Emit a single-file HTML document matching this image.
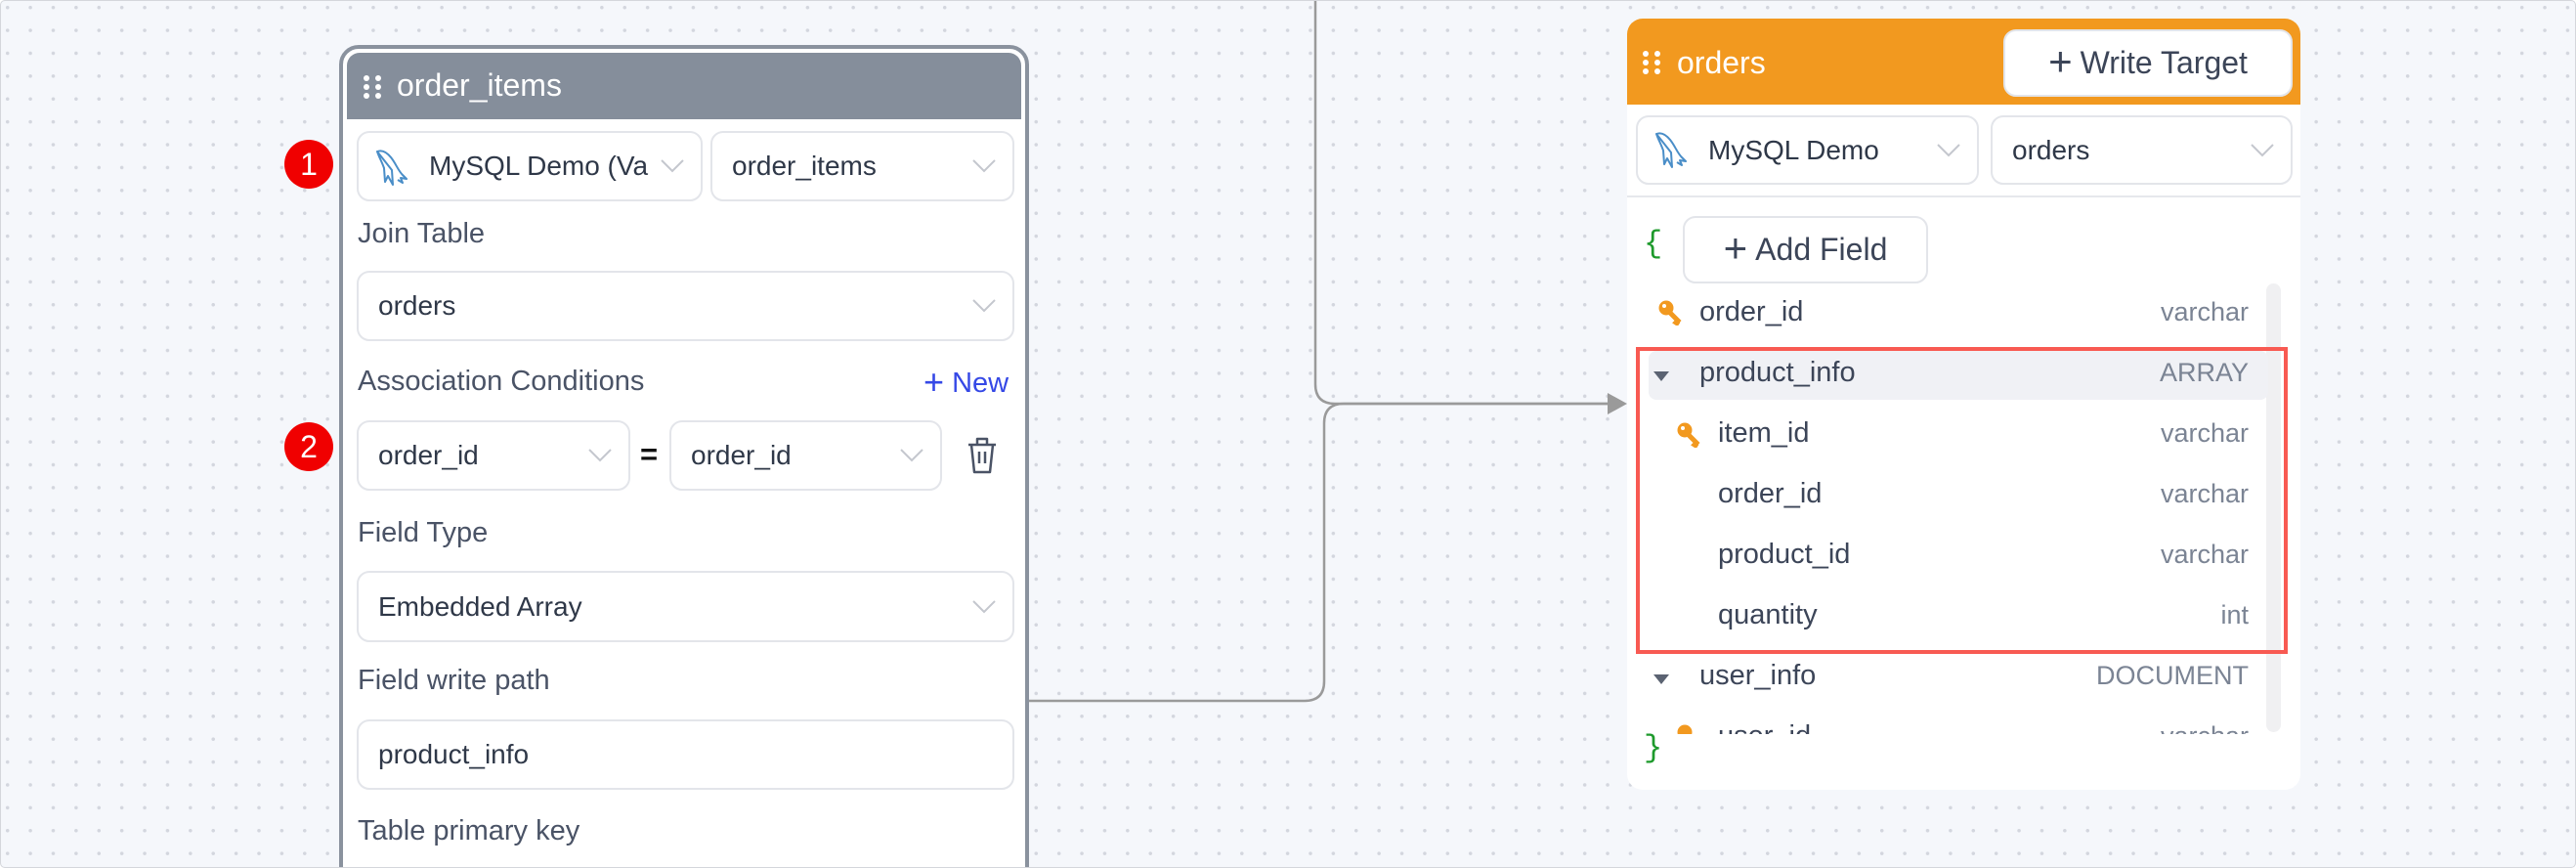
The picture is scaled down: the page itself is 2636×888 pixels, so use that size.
<!DOCTYPE html>
<html><head><meta charset="utf-8"><style>
*{box-sizing:border-box;margin:0;padding:0}
body{width:2636px;height:888px;overflow:hidden;background:#fff;font-family:"Liberation Sans",sans-serif;color:#3c4558;position:relative}
.frame{position:absolute;left:0;top:0;width:2636px;height:888px;border:1.5px solid #d4d6db;border-radius:5px;overflow:hidden;background-color:#f5f7fb;background-image:radial-gradient(circle,#d3d6de 1.6px,transparent 2px);background-size:23.4px 23.4px;background-position:-5px -5px}
.a{position:absolute}
.sel{position:absolute;background:#fff;border:2px solid #e3e5ea;border-radius:13px;font-size:28px;color:#2f3848;display:flex;align-items:center;padding-left:20px;white-space:nowrap;overflow:hidden}
.sel svg.chev{position:absolute;right:16px;top:50%;margin-top:-8px}
.lbl{position:absolute;font-size:29px;color:#4a5366}
.badge{position:absolute;width:50px;height:50px;border-radius:50%;background:#f00000;color:#fff;font-size:32px;display:flex;align-items:center;justify-content:center}
.row{position:absolute;left:0;width:640px;height:40px;font-size:29px;color:#3c4558}
.row .t{position:absolute;right:0;color:#7b8494;font-size:27px;top:1px}
</style></head><body>
<div class="frame">
<svg class="a" style="left:0;top:0" width="2636" height="888">
<path d="M1345 0 V392 Q1345 412 1365 412 H1650" fill="none" stroke="#9a9a9a" stroke-width="2.5"/>
<path d="M1044 716 H1334 Q1354 716 1354 696 V432 Q1354 412 1374 412 H1650" fill="none" stroke="#9a9a9a" stroke-width="2.5"/>
<path d="M1644 401 L1664 412 L1644 423 Z" fill="#9a9a9a"/>
</svg>

<!-- left node -->
<div class="a" style="left:346px;top:45px;width:706px;height:860px;border:4px solid #8a929e;border-radius:20px;background:#fff"></div>
<div class="a" style="left:354px;top:53px;width:690px;height:68px;background:#858e9b;border-radius:13px 13px 0 0"></div>
<svg class="a" style="left:370px;top:75px" width="22" height="26"><g fill="#fff"><circle cx="4" cy="4" r="3"/><circle cx="16" cy="4" r="3"/><circle cx="4" cy="13" r="3"/><circle cx="16" cy="13" r="3"/><circle cx="4" cy="22" r="3"/><circle cx="16" cy="22" r="3"/></g></svg>
<div class="a" style="left:405px;top:68px;font-size:32px;color:#fff">order_items</div>

<div class="badge" style="left:290px;top:142px">1</div>
<div class="sel" style="left:364px;top:133px;width:354px;height:72px;padding-left:72px">
<svg class="a" style="left:16px;top:16px" width="36" height="40" viewBox="0 0 36 40"><path d="M3 3 C8 1 13 4 17 9 C22 15 24 22 29 27 L33 31 L27 30 L29 35 L24 32 M18 22 L19 37 L14 28 L11 34 L10 20 C8 14 5 9 3 3 Z" fill="none" stroke="#4a8ec8" stroke-width="2" stroke-linejoin="round"/></svg>
MySQL Demo (Va
<svg class="chev" width="26" height="16"><polyline points="2,2 13,13 24,2" fill="none" stroke="#c4c7ce" stroke-width="2"/></svg></div>
<div class="sel" style="left:726px;top:133px;width:311px;height:72px">order_items<svg class="chev" width="26" height="16"><polyline points="2,2 13,13 24,2" fill="none" stroke="#c4c7ce" stroke-width="2"/></svg></div>

<div class="lbl" style="left:365px;top:222px">Join Table</div>
<div class="sel" style="left:364px;top:276px;width:673px;height:72px">orders<svg class="chev" width="26" height="16"><polyline points="2,2 13,13 24,2" fill="none" stroke="#c4c7ce" stroke-width="2"/></svg></div>

<div class="lbl" style="left:365px;top:373px">Association Conditions</div>
<div class="a" style="left:944px;top:373px;font-size:29px;color:#3548e6"><span style="font-size:36px;line-height:29px;position:relative;top:2px">+</span> New</div>

<div class="badge" style="left:290px;top:431px">2</div>
<div class="sel" style="left:364px;top:429px;width:280px;height:72px">order_id<svg class="chev" width="26" height="16"><polyline points="2,2 13,13 24,2" fill="none" stroke="#c4c7ce" stroke-width="2"/></svg></div>
<div class="a" style="left:654px;top:446px;font-size:31px;font-weight:bold;color:#111">=</div>
<div class="sel" style="left:684px;top:429px;width:279px;height:72px">order_id<svg class="chev" width="26" height="16"><polyline points="2,2 13,13 24,2" fill="none" stroke="#c4c7ce" stroke-width="2"/></svg></div>
<svg class="a" style="left:988px;top:445px" width="32" height="40" viewBox="0 0 32 40"><g fill="none" stroke="#4a5366" stroke-width="2.5" stroke-linejoin="round"><path d="M2 9 H30"/><path d="M11 9 V3 H21 V9"/><path d="M5 9 L8 37 H24 L27 9"/><path d="M13 16 V28 M19 16 V28"/></g></svg>

<div class="lbl" style="left:365px;top:528px">Field Type</div>
<div class="sel" style="left:364px;top:583px;width:673px;height:73px">Embedded Array<svg class="chev" width="26" height="16"><polyline points="2,2 13,13 24,2" fill="none" stroke="#c4c7ce" stroke-width="2"/></svg></div>
<div class="lbl" style="left:365px;top:679px">Field write path</div>
<div class="sel" style="left:364px;top:735px;width:673px;height:72px">product_info</div>
<div class="lbl" style="left:365px;top:833px">Table primary key</div>

<!-- right node -->
<div class="a" style="left:1664px;top:18px;width:689px;height:789px;background:#fff;border-radius:16px;overflow:hidden">
 <div class="a" style="left:0;top:0;width:689px;height:88px;background:#f2991f"></div>
 <svg class="a" style="left:15px;top:32px" width="22" height="26"><g fill="#fff"><circle cx="4" cy="4" r="3"/><circle cx="16" cy="4" r="3"/><circle cx="4" cy="13" r="3"/><circle cx="16" cy="13" r="3"/><circle cx="4" cy="22" r="3"/><circle cx="16" cy="22" r="3"/></g></svg>
 <div class="a" style="left:51px;top:27px;font-size:32px;color:#fff">orders</div>
 <div class="a" style="left:385px;top:11px;width:296px;height:69px;background:#fff;border:2px solid #e3e5ea;border-radius:13px;font-size:32px;color:#3c4558;display:flex;align-items:center;justify-content:center"><span style="font-size:42px;font-weight:300;margin-right:8px;position:relative;top:-2px">+</span>Write Target</div>
 <div class="a" style="left:0;top:181px;width:689px;height:2px;background:#e6e8ec"></div>
</div>
<div class="sel" style="left:1673px;top:117px;width:351px;height:71px;padding-left:72px">
<svg class="a" style="left:16px;top:14px" width="36" height="40" viewBox="0 0 36 40"><path d="M3 3 C8 1 13 4 17 9 C22 15 24 22 29 27 L33 31 L27 30 L29 35 L24 32 M18 22 L19 37 L14 28 L11 34 L10 20 C8 14 5 9 3 3 Z" fill="none" stroke="#4a8ec8" stroke-width="2" stroke-linejoin="round"/></svg>
MySQL Demo<svg class="chev" width="26" height="16"><polyline points="2,2 13,13 24,2" fill="none" stroke="#c4c7ce" stroke-width="2"/></svg></div>
<div class="sel" style="left:2036px;top:117px;width:309px;height:71px">orders<svg class="chev" width="26" height="16"><polyline points="2,2 13,13 24,2" fill="none" stroke="#c4c7ce" stroke-width="2"/></svg></div>

<div class="a" style="left:1681px;top:230px;font-size:32px;color:#1e9a2c;font-family:'Liberation Mono',monospace">{</div>
<div class="a" style="left:1721px;top:220px;width:251px;height:69px;background:#fff;border:2px solid #e3e5ea;border-radius:13px;font-size:32px;color:#3c4558;display:flex;align-items:center;justify-content:center"><span style="font-size:42px;font-weight:300;margin-right:8px;position:relative;top:-2px">+</span>Add Field</div>

<div class="a" style="left:2318px;top:289px;width:15px;height:459px;background:#f0f0f2;border-radius:8px"></div>
<div class="a" style="left:1686px;top:358px;width:634px;height:50px;background:#f0f1f5;border-radius:8px"></div>

<div class="a" style="left:1660px;top:290px;width:670px;height:460px;overflow:hidden">
 <svg class="a" style="left:35px;top:14px" width="26" height="28" viewBox="0 0 26 28"><circle cx="9" cy="10" r="7.5" fill="#f2991f"/><path d="M12 14 L21 23 L19 25 L22 27" stroke="#f2991f" stroke-width="5" fill="none"/><circle cx="7" cy="8" r="2" fill="#fff"/></svg>
 <div class="row" style="left:78px;top:12px;width:562px">order_id<span class="t">varchar</span></div>
 <svg class="a" style="left:30px;top:88px" width="18" height="12"><path d="M1 1 H17 L9 11 Z" fill="#5b6372"/></svg>
 <div class="row" style="left:78px;top:74px;width:562px">product_info<span class="t">ARRAY</span></div>
 <svg class="a" style="left:54px;top:139px" width="26" height="28" viewBox="0 0 26 28"><circle cx="9" cy="10" r="7.5" fill="#f2991f"/><path d="M12 14 L21 23 L19 25 L22 27" stroke="#f2991f" stroke-width="5" fill="none"/><circle cx="7" cy="8" r="2" fill="#fff"/></svg>
 <div class="row" style="left:97px;top:136px;width:543px">item_id<span class="t">varchar</span></div>
 <div class="row" style="left:97px;top:198px;width:543px">order_id<span class="t">varchar</span></div>
 <div class="row" style="left:97px;top:260px;width:543px">product_id<span class="t">varchar</span></div>
 <div class="row" style="left:97px;top:322px;width:543px">quantity<span class="t">int</span></div>
 <svg class="a" style="left:30px;top:398px" width="18" height="12"><path d="M1 1 H17 L9 11 Z" fill="#5b6372"/></svg>
 <div class="row" style="left:78px;top:384px;width:562px">user_info<span class="t">DOCUMENT</span></div>
 <svg class="a" style="left:54px;top:448px" width="26" height="28" viewBox="0 0 26 28"><circle cx="9" cy="10" r="7.5" fill="#f2991f"/></svg>
 <div class="row" style="left:97px;top:446px;width:543px">user_id<span class="t">varchar</span></div>
</div>
<div class="a" style="left:1681px;top:746px;font-size:32px;color:#1e9a2c;font-family:'Liberation Mono',monospace">}</div>

<div class="a" style="left:1673px;top:354px;width:667px;height:314px;border:4px solid #f85a52"></div>
</div>
</body></html>
